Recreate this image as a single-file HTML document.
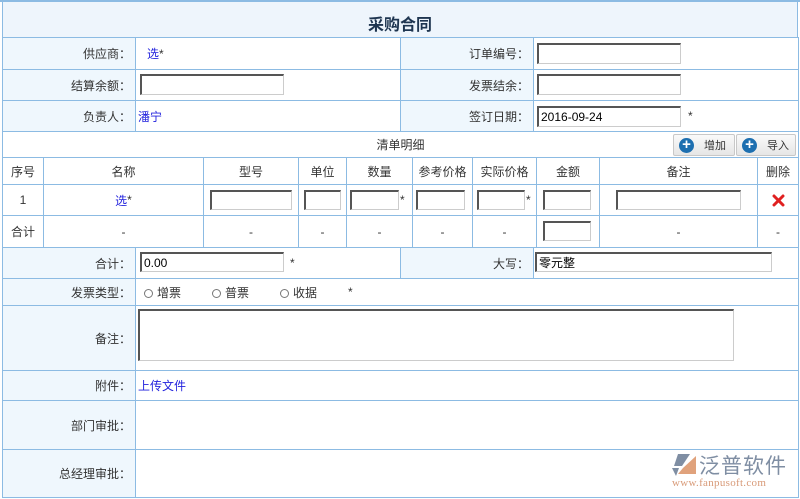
<!DOCTYPE html>
<html><head><meta charset="utf-8"><style>
*{margin:0;padding:0;box-sizing:border-box}
body{width:800px;height:499px;background:#fff;font-family:"Liberation Sans","Noto Sans CJK SC",sans-serif;font-size:12px;color:#333;position:relative;overflow:hidden}
.c{position:absolute;border-right:1px solid #8cbbe3;border-bottom:1px solid #8cbbe3;display:flex;align-items:center}
.l{background:#eff7fd;justify-content:flex-end;padding-right:4px}
.m{justify-content:center}
.i{position:absolute;background:#fff;border:1px solid #ccc;border-top:2px solid #555;border-left:2px solid #555;font-size:12px;color:#000;padding-left:2px;display:flex;align-items:center}
.a{color:#2222dd}
.s{position:absolute;font-size:12px}
.btn{position:absolute;height:22px;border:1px solid #c8c8c8;border-radius:2px;background:linear-gradient(#fafafa,#e6e6e6);font-size:11px;color:#333;display:flex;align-items:center}
.pl{width:15px;height:15px;border-radius:50%;background:#1d6fb0;color:#fff;font-weight:bold;font-size:15px;line-height:14px;text-align:center;margin:0 10px 0 5px}
.r{display:inline-block;width:9px;height:9px;border:1px solid #777;border-radius:50%;margin-right:4px;vertical-align:-1px}
</style></head><body>
<div style="position:absolute;left:0;top:0;width:800px;height:2px;background:#8cbbe3"></div>
<div style="position:absolute;left:2px;top:2px;width:796px;height:36px;background:#eef5fc;border-left:1px solid #8cbbe3;border-right:1px solid #8cbbe3"></div>
<div style="position:absolute;left:0;top:11px;width:800px;text-align:center;font-size:16px;font-weight:bold;color:#1e3550">采购合同</div>
<div style="position:absolute;left:2px;top:37px;width:797px;height:461px;border-left:1px solid #8cbbe3;border-top:1px solid #8cbbe3"></div>

<div class="c l" style="left:3px;top:38px;width:133px;height:32px">供应商：</div>
<div class="c" style="left:136px;top:38px;width:265px;height:32px;padding-left:11px"><span class="a">选</span>*</div>
<div class="c l" style="left:401px;top:38px;width:133px;height:32px">订单编号：</div>
<div class="c" style="left:534px;top:38px;width:265px;height:32px"></div>
<div class="i" style="left:537px;top:43px;width:144px;height:21px"></div>

<div class="c l" style="left:3px;top:70px;width:133px;height:31px">结算余额：</div>
<div class="c" style="left:136px;top:70px;width:265px;height:31px"></div>
<div class="i" style="left:140px;top:74px;width:144px;height:21px"></div>
<div class="c l" style="left:401px;top:70px;width:133px;height:31px">发票结余：</div>
<div class="c" style="left:534px;top:70px;width:265px;height:31px"></div>
<div class="i" style="left:537px;top:74px;width:144px;height:21px"></div>

<div class="c l" style="left:3px;top:101px;width:133px;height:31px">负责人：</div>
<div class="c a" style="left:136px;top:101px;width:265px;height:31px;padding-left:2px">潘宁</div>
<div class="c l" style="left:401px;top:101px;width:133px;height:31px">签订日期：</div>
<div class="c" style="left:534px;top:101px;width:265px;height:31px"></div>
<div class="i" style="left:537px;top:106px;width:144px;height:21px">2016-09-24</div>
<span class="s" style="left:688px;top:109px">*</span>

<div class="c m" style="left:3px;top:132px;width:796px;height:26px">清单明细</div>
<div class="btn" style="left:673px;top:134px;width:62px"><span class="pl">+</span>增加</div>
<div class="btn" style="left:736px;top:134px;width:60px"><span class="pl">+</span>导入</div>

<div class="c m" style="left:3px;top:158px;width:41px;height:27px">序号</div>
<div class="c m" style="left:44px;top:158px;width:160px;height:27px">名称</div>
<div class="c m" style="left:204px;top:158px;width:95px;height:27px">型号</div>
<div class="c m" style="left:299px;top:158px;width:48px;height:27px">单位</div>
<div class="c m" style="left:347px;top:158px;width:66px;height:27px">数量</div>
<div class="c m" style="left:413px;top:158px;width:60px;height:27px">参考价格</div>
<div class="c m" style="left:473px;top:158px;width:64px;height:27px">实际价格</div>
<div class="c m" style="left:537px;top:158px;width:63px;height:27px">金额</div>
<div class="c m" style="left:600px;top:158px;width:158px;height:27px">备注</div>
<div class="c m" style="left:758px;top:158px;width:41px;height:27px">删除</div>

<div class="c m" style="left:3px;top:185px;width:41px;height:31px">1</div>
<div class="c m" style="left:44px;top:185px;width:160px;height:31px"><span class="a">选</span>*</div>
<div class="c" style="left:204px;top:185px;width:95px;height:31px"></div>
<div class="c" style="left:299px;top:185px;width:48px;height:31px"></div>
<div class="c" style="left:347px;top:185px;width:66px;height:31px"></div>
<div class="c" style="left:413px;top:185px;width:60px;height:31px"></div>
<div class="c" style="left:473px;top:185px;width:64px;height:31px"></div>
<div class="c" style="left:537px;top:185px;width:63px;height:31px"></div>
<div class="c" style="left:600px;top:185px;width:158px;height:31px"></div>
<div class="c m" style="left:758px;top:185px;width:41px;height:31px"><svg width="13" height="13" viewBox="0 0 13 13"><path d="M2 2 L11 11 M11 2 L2 11" stroke="#e02020" stroke-width="3" stroke-linecap="round"/></svg></div>
<div class="i" style="left:210px;top:190px;width:82px;height:20px"></div>
<div class="i" style="left:304px;top:190px;width:37px;height:20px"></div>
<div class="i" style="left:350px;top:190px;width:49px;height:20px"></div>
<span class="s" style="left:400px;top:193px">*</span>
<div class="i" style="left:416px;top:190px;width:49px;height:20px"></div>
<div class="i" style="left:477px;top:190px;width:48px;height:20px"></div>
<span class="s" style="left:526px;top:193px">*</span>
<div class="i" style="left:543px;top:190px;width:48px;height:20px"></div>
<div class="i" style="left:616px;top:190px;width:125px;height:20px"></div>

<div class="c m" style="left:3px;top:216px;width:41px;height:32px">合计</div>
<div class="c m" style="left:44px;top:216px;width:160px;height:32px">-</div>
<div class="c m" style="left:204px;top:216px;width:95px;height:32px">-</div>
<div class="c m" style="left:299px;top:216px;width:48px;height:32px">-</div>
<div class="c m" style="left:347px;top:216px;width:66px;height:32px">-</div>
<div class="c m" style="left:413px;top:216px;width:60px;height:32px">-</div>
<div class="c m" style="left:473px;top:216px;width:64px;height:32px">-</div>
<div class="c" style="left:537px;top:216px;width:63px;height:32px"></div>
<div class="c m" style="left:600px;top:216px;width:158px;height:32px">-</div>
<div class="c m" style="left:758px;top:216px;width:41px;height:32px">-</div>
<div class="i" style="left:543px;top:221px;width:48px;height:20px"></div>

<div class="c l" style="left:3px;top:248px;width:133px;height:31px">合计：</div>
<div class="c" style="left:136px;top:248px;width:265px;height:31px"></div>
<div class="i" style="left:140px;top:252px;width:144px;height:20px">0.00</div>
<span class="s" style="left:290px;top:256px">*</span>
<div class="c l" style="left:401px;top:248px;width:133px;height:31px">大写：</div>
<div class="c" style="left:534px;top:248px;width:265px;height:31px"></div>
<div class="i" style="left:535px;top:252px;width:237px;height:20px">零元整</div>

<div class="c l" style="left:3px;top:279px;width:133px;height:27px">发票类型：</div>
<div class="c" style="left:136px;top:279px;width:663px;height:27px;padding-left:8px"><span style="width:68px"><i class="r"></i>增票</span><span style="width:68px"><i class="r"></i>普票</span><span style="width:68px"><i class="r"></i>收据</span>*</div>

<div class="c l" style="left:3px;top:306px;width:133px;height:65px">备注：</div>
<div class="c" style="left:136px;top:306px;width:663px;height:65px"></div>
<div class="i" style="left:138px;top:309px;width:596px;height:52px"></div>

<div class="c l" style="left:3px;top:371px;width:133px;height:30px">附件：</div>
<div class="c a" style="left:136px;top:371px;width:663px;height:30px;padding-left:2px">上传文件</div>

<div class="c l" style="left:3px;top:401px;width:133px;height:49px">部门审批：</div>
<div class="c" style="left:136px;top:401px;width:663px;height:49px"></div>
<div class="c l" style="left:3px;top:450px;width:133px;height:48px">总经理审批：</div>
<div class="c" style="left:136px;top:450px;width:663px;height:48px"></div>

<svg style="position:absolute;left:670px;top:452px" width="30" height="26" viewBox="0 0 30 26">
<path d="M8 2 L20 2 L12 14 L4 14 Z" fill="#7f8ea3"/>
<path d="M13 16 L26 4 L26 22 L8 22 Z" fill="#e0a27c"/>
<path d="M2 16 L9 16 L6 24 Z" fill="#7f8ea3"/>
</svg>
<div style="position:absolute;left:699px;top:450px;font-size:21px;color:#7f8ea3;letter-spacing:1px">泛普软件</div>
<div style="position:absolute;left:672px;top:477px;font-size:11px;color:#d89a78;font-family:'Liberation Serif',serif;letter-spacing:0.3px">www.fanpusoft.com</div>
</body></html>
